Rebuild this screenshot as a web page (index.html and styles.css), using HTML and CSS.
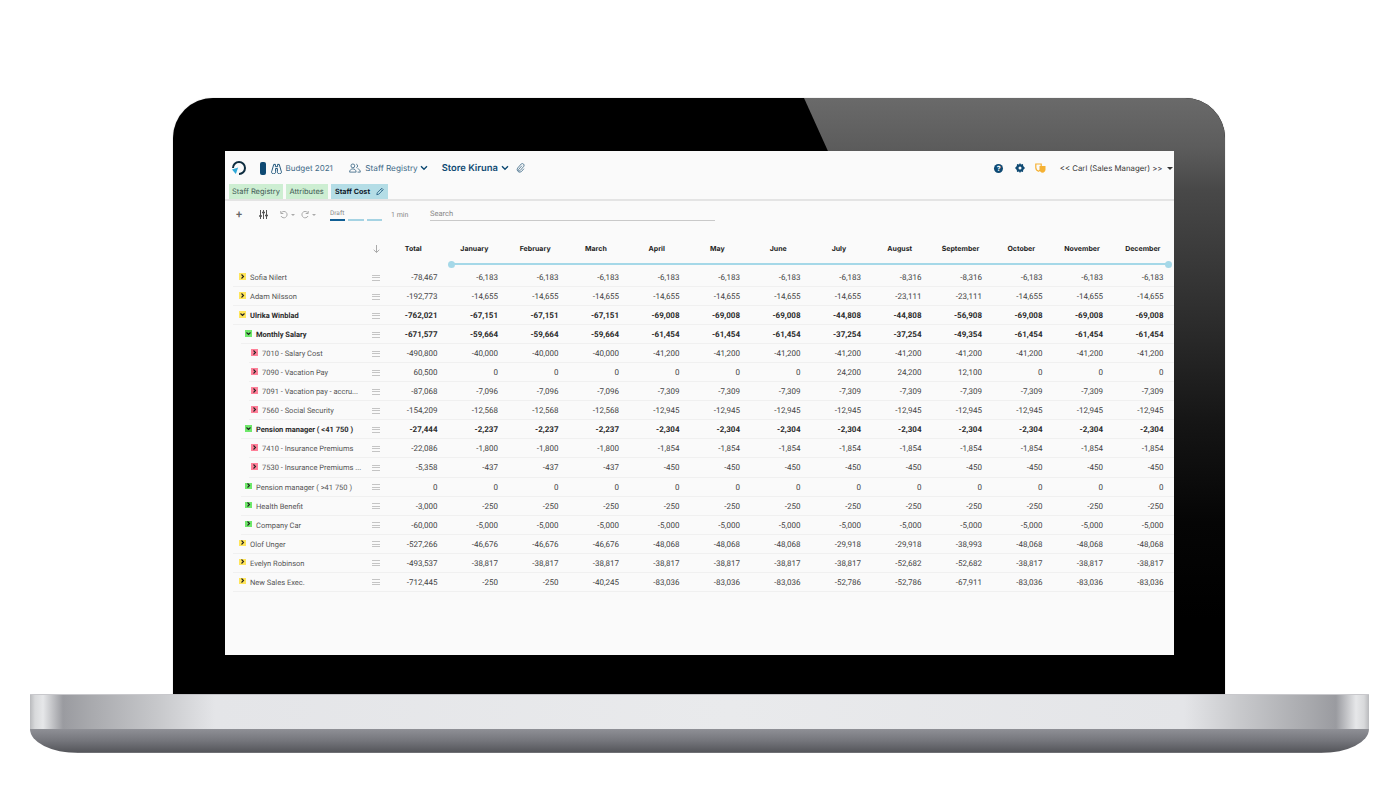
FILE: index.html
```html
<!DOCTYPE html>
<html lang="en">
<head>
    <meta charset="UTF-8">
    <title>Staff Cost</title>
    <link rel="stylesheet" href="styles.css">
</head>
<body>
<div class="laptop">
    <div class="lid">
        <div class="glare"></div>
        <div class="screen">
            <header class="topbar">
                <svg class="logo" width="16" height="16" viewBox="0 0 16 16"><path d="M2 8A6 6 0 1 1 8 14" fill="none" stroke="#0d2c3f" stroke-width="2"/><path d="M1 9.500 7.200 7.500 4.800 14z" fill="#2fa8d8"/></svg>
                <span class="pill"></span>
                <svg class="ico-binoc" width="11" height="11" viewBox="0 0 12 12"><path d="M3 1.500h1.800V4h2.400V1.500H9L11 8.500a2.200 2.200 0 1 1-4 1V6H5v3.500a2.200 2.200 0 1 1-4-1z" fill="none" stroke="#0f4a73" stroke-width="1"/></svg>
                <span class="crumb budget">Budget 2021</span>
                <svg class="ico-users" width="12" height="10" viewBox="0 0 14 11"><circle cx="4.500" cy="3" r="2.200" fill="none" stroke="#3f6a88"/><path d="M.7 10.300c0-5 7.600-5 7.600 0z" fill="none" stroke="#3f6a88"/><path d="M8.500 1a2.200 2.200 0 0 1 0 4.200M10 6.300c1.800.4 3.200 1.800 3.200 4H10" fill="none" stroke="#3f6a88"/></svg>
                <span class="crumb registry">Staff Registry</span>
                <svg class="chev" width="8" height="6" viewBox="0 0 8 6"><path d="M1 1.300 4 4.300 7 1.300" fill="none" stroke="#0f4a73" stroke-width="1.400"/></svg>
                <span class="store">Store Kiruna</span>
                <svg class="chev" width="8" height="6" viewBox="0 0 8 6"><path d="M1 1.300 4 4.300 7 1.300" fill="none" stroke="#0f4a73" stroke-width="1.400"/></svg>
                <svg class="clip" width="9" height="10" viewBox="0 0 10 11"><path d="M6.500 3 3 7a1 1 0 0 0 1.500 1.400L8.800 3.500A2 2 0 0 0 5.800 1L1.800 5.600A2.900 2.900 0 0 0 6 9.500L8.800 6.300" fill="none" stroke="#3f6a88" stroke-width=".9"/></svg>
                <div class="top-right">
                    <span class="help">?</span>
                    <svg class="gear" width="10" height="10" viewBox="0 0 10 10"><path d="M5 0 6 1.500 8 1 8.200 3 10 5 8.200 7 8 9 6 8.500 5 10 4 8.500 2 9 1.800 7 0 5 1.800 3 2 1 4 1.500z" fill="#0f4a73"/><circle cx="5" cy="5" r="1.500" fill="#fafafa"/></svg>
                    <svg class="masks" width="11" height="10" viewBox="0 0 11 10"><path d="M.8 1h5.400v3.500c0 2-1.300 3.200-2.700 3.800C2 7.700.8 6.500.8 4.500z" fill="none" stroke="#f5b133" stroke-width="1.200"/><path d="M4.500 3h6v3.500c0 1.800-1.500 3-3 3.300-1.500-.3-3-1.500-3-3.300z" fill="#f5b133"/></svg>
                    <span class="user">&lt;&lt; Carl (Sales Manager) &gt;&gt;</span>
                    <span class="caret"></span>
                </div>
            </header>
            <nav class="tabs">
                <span class="tab green">Staff Registry</span>
                <span class="tab green wide">Attributes</span>
                <span class="tab blue">Staff Cost
                    <svg width="9" height="9" viewBox="0 0 10 10"><path d="M1 9 1.600 6.500 7.300 .9 9.100 2.700 3.500 8.400zM6 2.300 7.700 4" fill="none" stroke="#0f4a73" stroke-width=".9"/></svg>
                </span>
            </nav>
            <div class="toolbar">
                <span class="plus">+</span>
                <svg class="sliders" width="9" height="9" viewBox="0 0 9 9"><path d="M1.500 0v9M4.500 0v9M7.500 0v9" stroke="#555" stroke-width="1"/><path d="M0 6h3M3 2.500h3M6 5.500h3" stroke="#555" stroke-width="1.400"/></svg>
                <svg class="undo" width="8" height="8" viewBox="0 0 8 8"><path d="M1.500 1.500A3.200 3.200 0 1 1 1 5" fill="none" stroke="#aaa"/><path d="M.8 0v2.500h2.500" fill="none" stroke="#aaa"/></svg>
                <span class="caret small"></span>
                <svg class="redo" width="8" height="8" viewBox="0 0 8 8"><path d="M6.500 1.500A3.200 3.200 0 1 0 7 5" fill="none" stroke="#aaa"/><path d="M7.200 0v2.500H4.700" fill="none" stroke="#aaa"/></svg>
                <span class="caret small"></span>
                <div class="steps">
                    <span class="draft">Draft</span>
                    <div class="step-bars"><i class="on"></i><i></i><i></i></div>
                </div>
                <span class="mins">1 min</span>
                <span class="search">Search</span>
            </div>
            <div class="row head">
                <span></span>
                <svg class="sort" width="7" height="8" viewBox="0 0 7 8"><path d="M3.500 0v7.500M.7 4.800l2.800 2.700 2.800-2.700" fill="none" stroke="#aaa"/></svg>
                <b class="total">Total</b><b>January</b><b>February</b><b>March</b><b>April</b><b>May</b><b>June</b><b>July</b><b>August</b><b>September</b><b>October</b><b>November</b><b>December</b>
            </div>
            <div class="timeline"></div>
            <div id="rows"></div>
        </div>
    </div>
    <div class="base">
        <div class="base-top"></div>
        <div class="base-bottom"></div>
    </div>
</div>
<script src="rows.js"></script>
</body>
</html>
```

FILE: styles.css
```css
* { box-sizing: border-box; }
html, body { margin: 0; height: 788px; overflow: hidden; background: white; }
body {
    padding-top: 98px;
    font-family: "Roboto", "Liberation Sans", sans-serif;
    text-rendering: geometricPrecision;
}

.laptop { width: 1400px; }
.lid {
    position: relative;
    width: 1052px;
    height: 596px;
    margin-left: 173px;
    padding: 53px 51px 39px 52px;
    background: black;
    border-radius: 40px 40px 0 0;
    box-shadow: 0 0 1px #888;
    overflow: hidden;
}
.glare {
    position: absolute;
    inset: 0;
    background: linear-gradient(180deg, #6a6a6a 0, #5c5c5c 50px, #484848 92px, #2c2c2c 225px, #151515 325px, #050505 425px, #000 520px);
    clip-path: polygon(631px 0, 1052px 0, 1052px 596px, 900px 596px);
}
.screen {
    position: relative;
    width: 949px;
    height: 504px;
    background: #fafafa;
}

.base { margin-left: 30px; width: 1339px; }
.base-top {
    height: 35px;
    background: linear-gradient(90deg, #b9babd 0, #d8d9db 5px, #e6e7e9 13px, #9a9ba0 33px, #a8a9ad 60px, #c8c9cc 130px, #e4e5e8 185px, #e9eaec 700px, #e4e5e8 1154px, #c8c9cc 1209px, #a8a9ad 1279px, #9a9ba0 1306px, #e6e7e9 1326px, #d8d9db 1334px, #b9babd 1339px);
    border-top: 1px solid #c8c8cc;
}
.base-bottom {
    height: 24px;
    background: linear-gradient(180deg, #8f9096 0, #74757b 12px, #55565b 23px, #8a8a8e 24px);
    border-radius: 0 0 48px 48px / 0 0 24px 24px;
}

.topbar {
    display: flex;
    align-items: center;
    height: 33px;
    padding: 1px 0 0 6px;
    color: #0f4a73;
    font-family: "Inter", "Liberation Sans", sans-serif;
}
.logo { margin-right: 13px; }
.pill { width: 6px; height: 13px; border-radius: 2px; background: #0f4a73; margin-right: 5px; }
.ico-binoc { margin-right: 3.500px; }
.crumb { color: #3f6a88; font-size: 8.200px; }
.budget { font-size: 8px; margin-right: 16.500px; }
.ico-users { margin-right: 4px; }
.registry { margin-right: 2px; }
.store { margin-left: 14px; margin-right: 3px; color: #0f4a73; font-size: 9.400px; font-weight: 600; }
.clip { margin-left: 7px; }
.top-right { display: flex; align-items: center; margin-left: auto; }
.help {
    width: 9px;
    height: 9px;
    border-radius: 50%;
    background: #0f4a73;
    color: white;
    font-size: 7px;
    font-weight: 700;
    line-height: 9px;
    text-align: center;
    margin-right: 12px;
}
.gear { margin-right: 10px; }
.masks { margin-right: 13.500px; }
.user { color: #333; font-size: 7.800px; margin-right: 4.500px; }
.caret { width: 0; height: 0; border: 3px solid transparent; border-top-color: #333; border-bottom: 0; margin-right: 1px; }
.caret.small { border-top-color: #aaa; border-width: 2.500px; border-bottom: 0; margin: 0 0 0 3px; }

.tabs {
    display: flex;
    gap: 3px;
    height: 15px;
    padding-left: 4px;
    font-family: "Inter", "Liberation Sans", sans-serif;
    font-size: 7.500px;
    white-space: nowrap;
}
.tab { display: flex; align-items: center; gap: 6px; padding: 0 3px; height: 15px; color: #3f5a55; }
.tab.green { background: #cdeed2; }
.tab.wide { padding: 0 3.500px; width: 42px; }
.tab.blue { background: #b4dde6; color: #10202c; font-weight: 700; padding: 0 4px; width: 57px; font-size: 7.200px; }

.toolbar {
    display: flex;
    align-items: center;
    height: 28px;
    padding: 1px 0 0 11px;
    border-top: 2px solid #e4e4e4;
    color: #888;
    font-size: 7px;
}
.plus { width: 8px; color: #666; font-size: 11px; font-weight: 500; line-height: 8px; margin-right: 15px; }
.sliders { margin-right: 12px; }
.redo { margin-left: 6px; }
.steps { width: 52px; margin-left: 14px; padding-top: 1px; }
.draft { display: block; font-size: 6.500px; line-height: 8px; margin-bottom: 2px; }
.step-bars { display: flex; gap: 3px; }
.step-bars i { display: block; width: 16px; height: 2px; background: #a5d3e3; }
.step-bars i.on { background: #0f5e94; }
.mins { margin-left: 9px; width: 39px; }
.search { width: 285px; height: 13px; font-size: 7.500px; line-height: 11px; border-bottom: 1px solid #c9c9c9; }

.row {
    display: grid;
    grid-template-columns: 145px 12px 55.500px repeat(12, 60.500px);
    align-items: center;
    height: 19.060px;
    font-size: 8px;
    color: #444;
    text-align: right;
}
.row.head {
    grid-template-columns: 145px 12px 55.500px repeat(12, 60.770px);
    margin-top: 15px;
    height: 13px;
    color: #222;
    font-family: "Inter", "Liberation Sans", sans-serif;
    font-size: 7px;
    text-align: center;
}
.row.head b { font-weight: 700; padding-left: 13px; }
.row.head b.total { padding-left: 7px; }
.sort { justify-self: center; }

.timeline {
    position: relative;
    height: 2px;
    margin: 8px 5px 3px 226px;
    background: #a5d8e8;
}
.timeline::before, .timeline::after {
    content: "";
    position: absolute;
    top: -2.500px;
    width: 7px;
    height: 7px;
    border-radius: 50%;
    background: #a5d8e8;
}
.timeline::before { left: -3px; }
.timeline::after { right: -3px; }

.data-row { position: relative; }
.data-row::after {
    content: "";
    position: absolute;
    left: 8px;
    right: 0;
    bottom: 0;
    border-bottom: 1px solid #f0f0f0;
}
.data-row.lvl1::after { left: 16px; }
.data-row.lvl2::after { left: 24px; }
.name { display: flex; align-items: center; color: #555; font-size: 7.500px; text-align: left; white-space: nowrap; overflow: hidden; }
.toggle {
    flex: none;
    display: flex;
    align-items: center;
    justify-content: center;
    width: 7px;
    height: 7px;
    margin-right: 4.500px;
    margin-top: -3px;
}
.toggle svg { display: block; }
.lvl0 .name { padding-left: 13.500px; }
.lvl1 .name { padding-left: 19.500px; }
.lvl2 .name { padding-left: 25.500px; }
.yellow { background: #ffe55a; }
.lime { background: #6ee86a; }
.pink { background: #ff7f98; }
.bold, .bold .name { font-weight: 700; color: #2b2b2b; }
.handle { display: block; width: 8px; height: 6px; justify-self: center; border-top: 1px solid #c4c4c4; border-bottom: 1px solid #c4c4c4; position: relative; }
.handle::after { content: ""; position: absolute; left: 0; right: 0; top: 1.500px; border-top: 1px solid #c4c4c4; }
```

FILE: rows.js
```js
// [level, colour, open, bold, label, values...]
var data = [
    [0, "yellow", 0, 0, "Sofia Nilert", "-78,467", "-6,183", "-6,183", "-6,183", "-6,183", "-6,183", "-6,183", "-6,183", "-8,316", "-8,316", "-6,183", "-6,183", "-6,183"],
    [0, "yellow", 0, 0, "Adam Nilsson", "-192,773", "-14,655", "-14,655", "-14,655", "-14,655", "-14,655", "-14,655", "-14,655", "-23,111", "-23,111", "-14,655", "-14,655", "-14,655"],
    [0, "yellow", 1, 1, "Ulrika Winblad", "-762,021", "-67,151", "-67,151", "-67,151", "-69,008", "-69,008", "-69,008", "-44,808", "-44,808", "-56,908", "-69,008", "-69,008", "-69,008"],
    [1, "lime", 1, 1, "Monthly Salary", "-671,577", "-59,664", "-59,664", "-59,664", "-61,454", "-61,454", "-61,454", "-37,254", "-37,254", "-49,354", "-61,454", "-61,454", "-61,454"],
    [2, "pink", 0, 0, "7010 - Salary Cost", "-490,800", "-40,000", "-40,000", "-40,000", "-41,200", "-41,200", "-41,200", "-41,200", "-41,200", "-41,200", "-41,200", "-41,200", "-41,200"],
    [2, "pink", 0, 0, "7090 - Vacation Pay", "60,500", "0", "0", "0", "0", "0", "0", "24,200", "24,200", "12,100", "0", "0", "0"],
    [2, "pink", 0, 0, "7091 - Vacation pay - accru...", "-87,068", "-7,096", "-7,096", "-7,096", "-7,309", "-7,309", "-7,309", "-7,309", "-7,309", "-7,309", "-7,309", "-7,309", "-7,309"],
    [2, "pink", 0, 0, "7560 - Social Security", "-154,209", "-12,568", "-12,568", "-12,568", "-12,945", "-12,945", "-12,945", "-12,945", "-12,945", "-12,945", "-12,945", "-12,945", "-12,945"],
    [1, "lime", 1, 1, "Pension manager ( <41 750 )", "-27,444", "-2,237", "-2,237", "-2,237", "-2,304", "-2,304", "-2,304", "-2,304", "-2,304", "-2,304", "-2,304", "-2,304", "-2,304"],
    [2, "pink", 0, 0, "7410 - Insurance Premiums", "-22,086", "-1,800", "-1,800", "-1,800", "-1,854", "-1,854", "-1,854", "-1,854", "-1,854", "-1,854", "-1,854", "-1,854", "-1,854"],
    [2, "pink", 0, 0, "7530 - Insurance Premiums ...", "-5,358", "-437", "-437", "-437", "-450", "-450", "-450", "-450", "-450", "-450", "-450", "-450", "-450"],
    [1, "lime", 0, 0, "Pension manager ( >41 750 )", "0", "0", "0", "0", "0", "0", "0", "0", "0", "0", "0", "0", "0"],
    [1, "lime", 0, 0, "Health Benefit", "-3,000", "-250", "-250", "-250", "-250", "-250", "-250", "-250", "-250", "-250", "-250", "-250", "-250"],
    [1, "lime", 0, 0, "Company Car", "-60,000", "-5,000", "-5,000", "-5,000", "-5,000", "-5,000", "-5,000", "-5,000", "-5,000", "-5,000", "-5,000", "-5,000", "-5,000"],
    [0, "yellow", 0, 0, "Olof Unger", "-527,266", "-46,676", "-46,676", "-46,676", "-48,068", "-48,068", "-48,068", "-29,918", "-29,918", "-38,993", "-48,068", "-48,068", "-48,068"],
    [0, "yellow", 0, 0, "Evelyn Robinson", "-493,537", "-38,817", "-38,817", "-38,817", "-38,817", "-38,817", "-38,817", "-38,817", "-52,682", "-52,682", "-38,817", "-38,817", "-38,817"],
    [0, "yellow", 0, 0, "New Sales Exec.", "-712,445", "-250", "-250", "-40,245", "-83,036", "-83,036", "-83,036", "-52,786", "-52,786", "-67,911", "-83,036", "-83,036", "-83,036"]
];

var closedIcon = '<svg width="5" height="5" viewBox="0 0 5 5"><path d="M1.500 .5 3.500 2.500 1.500 4.500" fill="none" stroke="#222" stroke-width="1.100"/></svg>';
var openIcon = '<svg width="5" height="5" viewBox="0 0 5 5"><path d="M.5 1.500 2.500 3.500 4.500 1.500" fill="none" stroke="#222" stroke-width="1.100"/></svg>';

var html = "";
data.forEach(function (r) {
    var cls = "row data-row lvl" + r[0] + (r[3] ? " bold" : "");
    html += '<div class="' + cls + '">';
    html += '<span class="name"><span class="toggle ' + r[1] + '">' + (r[2] ? openIcon : closedIcon) + '</span><span class="label"></span></span>';
    html += '<i class="handle"></i>';
    for (var i = 5; i < r.length; i++) {
        html += "<span>" + r[i] + "</span>";
    }
    html += "</div>";
});
document.getElementById("rows").innerHTML = html;

// labels go in as text, some of them hold a < or >
var labels = document.querySelectorAll("#rows .label");
data.forEach(function (r, i) {
    labels[i].textContent = r[4];
});
```
